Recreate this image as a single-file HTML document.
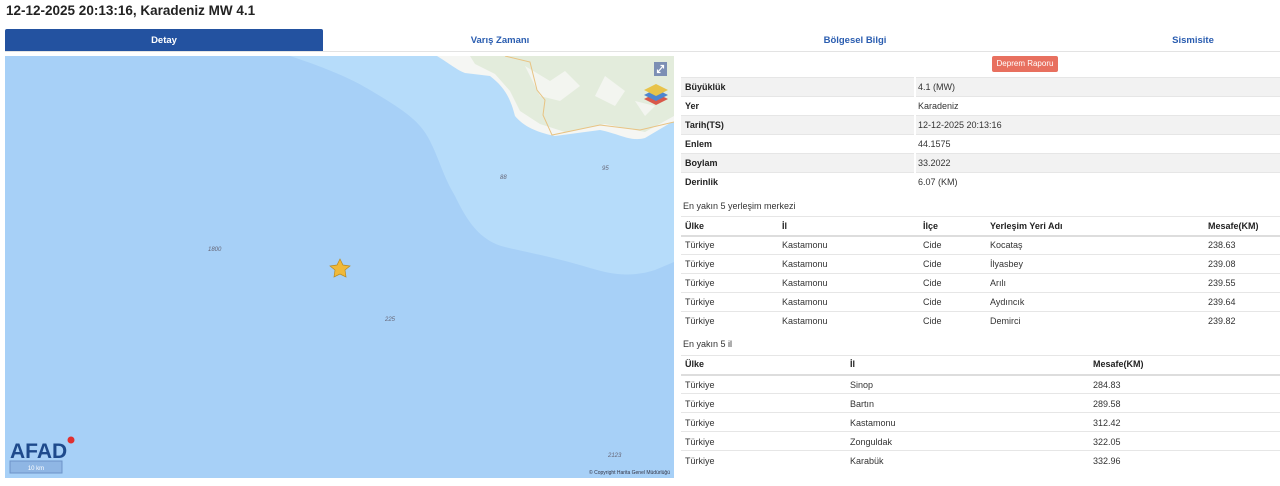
<!DOCTYPE html>
<html><head><meta charset="utf-8"><style>
*{margin:0;padding:0;box-sizing:border-box}
body{width:1280px;height:486px;background:#fff;font-family:"Liberation Sans",Arial,sans-serif;color:#222;position:relative;overflow:hidden}
.a{position:absolute;white-space:nowrap}
h1{position:absolute;left:6px;top:3px;font-size:13.5px;font-weight:bold;color:#222}
.tabs{position:absolute;left:5px;top:29px;width:1275px;height:23px;border-bottom:1px solid #e3e3e3}
.tab{position:absolute;top:0;height:22px;line-height:24px;font-size:9.5px;font-weight:bold;color:#2a5db0;text-align:center}
.t{font-size:9px;color:#333}
.b{font-weight:bold;color:#222}
.row{position:absolute;left:681px;width:599px;height:19px;border-top:1px solid #e6e6e6}
</style></head><body>
<h1>12-12-2025 20:13:16, Karadeniz MW 4.1</h1>
<div class="tabs">
<div class="tab" style="left:0;width:318px;background:#2352a0;color:#fff;border-radius:2px 2px 0 0">Detay</div>
<div class="tab" style="left:330px;width:330px">Varış Zamanı</div>
<div class="tab" style="left:680px;width:340px">Bölgesel Bilgi</div>
<div class="tab" style="left:1020px;width:336px">Sismisite</div>
</div>
<svg class="a" style="left:5px;top:56px" width="669" height="422" viewBox="0 0 669 422">
<rect width="669" height="422" fill="#a7d0f7"/>
<path d="M285 0 C330 15 350 25 365 34 C400 55 415 65 425 85 C435 105 438 120 450 140 C462 165 475 185 500 191 C520 196 545 200 585 212 C605 218 625 222 650 214 L669 206 L669 0Z" fill="#b6dcfa"/>
<path d="M432 0 C445 8 452 14 460 17 L485 20 C498 30 505 40 510 60 C520 72 535 77 550 80 L595 74 C615 78 625 86 640 82 L667 66 L669 66 L669 0Z" fill="#f5f6f3"/>
<path d="M465 0 L669 0 L669 60 L640 76 L600 68 L560 76 L535 68 L515 55 L505 35 L490 18 L470 8Z" fill="#e3ecdc"/>
<path d="M520 10 L545 25 L560 15 L575 30 L555 45 L535 40Z M600 20 L620 35 L610 50 L590 40Z M630 45 L650 50 L640 60Z" fill="#f3f5f0"/>
<path d="M500 0 L525 6 L532 34 L540 44 L538 59 L547 79 L595 69 L635 74 L669 66" fill="none" stroke="#e8c383" stroke-width="1"/>
<rect x="649" y="6" width="13" height="14" fill="#7c8fb4"/>
<path d="M652.5 16.5 L658.5 9.5 M655.5 9.5 L658.5 9.5 L658.5 12.5 M652.5 13.5 L652.5 16.5 L655.5 16.5" stroke="#fff" stroke-width="1.2" fill="none"/>
<path d="M651 49 L639 43 L651 37 L663 43Z" fill="#d9584a"/>
<path d="M651 45 L639 39 L651 33 L663 39Z" fill="#4f86cf"/>
<path d="M651 40 L639 34 L651 28 L663 34Z" fill="#e8c34a"/>
<polygon points="335,203 338,209 345,210 340,214 341,221 335,218 329,221 330,214 325,210 332,209" fill="#f0b93a" stroke="#b88a20" stroke-width=".7"/>
<g font-size="6" fill="#667" font-style="italic" font-family="Liberation Sans">
<text x="495" y="123">88</text><text x="597" y="114">95</text><text x="203" y="195">1800</text><text x="380" y="265">225</text><text x="603" y="401">2123</text></g>
<text x="5" y="402" font-size="21" font-weight="bold" fill="#1e4a8c" font-family="Liberation Sans">AFAD</text>
<circle cx="66" cy="384" r="3.5" fill="#e03030"/>
<rect x="5" y="405" width="52" height="12" fill="#8fb6e4" stroke="#6d93c8"/>
<text x="31" y="414" font-size="6" fill="#fff" text-anchor="middle">10 km</text>
<text x="665" y="418" font-size="5" fill="#334" text-anchor="end">© Copyright Harita Genel Müdürlüğü</text>
</svg>
<div class="a" style="left:992px;top:56px;width:66px;height:16px;background:#e8705f;border-radius:2px;color:#fff;font-size:8px;line-height:16px;text-align:center">Deprem Raporu</div>
<div class="row" style="top:77px;background:#f2f2f2"></div>
<div class="row" style="top:96px"></div>
<div class="row" style="top:115px;background:#f2f2f2"></div>
<div class="row" style="top:134px"></div>
<div class="row" style="top:153px;background:#f2f2f2"></div>
<div class="row" style="top:172px"></div>
<div class="a" style="left:914px;top:77px;width:2px;height:114px;background:#fff"></div>
<div class="a t b" style="left:685px;top:82px">Büyüklük</div><div class="a t" style="left:918px;top:82px">4.1 (MW)</div>
<div class="a t b" style="left:685px;top:101px">Yer</div><div class="a t" style="left:918px;top:101px">Karadeniz</div>
<div class="a t b" style="left:685px;top:120px">Tarih(TS)</div><div class="a t" style="left:918px;top:120px">12-12-2025 20:13:16</div>
<div class="a t b" style="left:685px;top:139px">Enlem</div><div class="a t" style="left:918px;top:139px">44.1575</div>
<div class="a t b" style="left:685px;top:158px">Boylam</div><div class="a t" style="left:918px;top:158px">33.2022</div>
<div class="a t b" style="left:685px;top:177px">Derinlik</div><div class="a t" style="left:918px;top:177px">6.07 (KM)</div>
<div class="a t" style="left:683px;top:201px">En yakın 5 yerleşim merkezi</div>
<div class="row" style="top:216px"></div>
<div class="row" style="top:235px;border-top:2px solid #ddd"></div>
<div class="row" style="top:254px"></div><div class="row" style="top:273px"></div><div class="row" style="top:292px"></div><div class="row" style="top:311px"></div>
<div class="a t b" style="left:685px;top:221px">Ülke</div><div class="a t b" style="left:782px;top:221px">İl</div><div class="a t b" style="left:923px;top:221px">İlçe</div><div class="a t b" style="left:990px;top:221px">Yerleşim Yeri Adı</div><div class="a t b" style="left:1208px;top:221px">Mesafe(KM)</div>
<div class="a t" style="left:685px;top:236px;line-height:19px">Türkiye<br>Türkiye<br>Türkiye<br>Türkiye<br>Türkiye</div>
<div class="a t" style="left:782px;top:236px;line-height:19px">Kastamonu<br>Kastamonu<br>Kastamonu<br>Kastamonu<br>Kastamonu</div>
<div class="a t" style="left:923px;top:236px;line-height:19px">Cide<br>Cide<br>Cide<br>Cide<br>Cide</div>
<div class="a t" style="left:990px;top:236px;line-height:19px">Kocataş<br>İlyasbey<br>Arılı<br>Aydıncık<br>Demirci</div>
<div class="a t" style="left:1208px;top:236px;line-height:19px">238.63<br>239.08<br>239.55<br>239.64<br>239.82</div>
<div class="a t" style="left:683px;top:339px">En yakın 5 il</div>
<div class="row" style="top:355px"></div>
<div class="row" style="top:374px;border-top:2px solid #ddd"></div>
<div class="row" style="top:393px"></div><div class="row" style="top:412px"></div><div class="row" style="top:431px"></div><div class="row" style="top:450px"></div>
<div class="a t b" style="left:685px;top:359px">Ülke</div><div class="a t b" style="left:850px;top:359px">İl</div><div class="a t b" style="left:1093px;top:359px">Mesafe(KM)</div>
<div class="a t" style="left:685px;top:376px;line-height:19px">Türkiye<br>Türkiye<br>Türkiye<br>Türkiye<br>Türkiye</div>
<div class="a t" style="left:850px;top:376px;line-height:19px">Sinop<br>Bartın<br>Kastamonu<br>Zonguldak<br>Karabük</div>
<div class="a t" style="left:1093px;top:376px;line-height:19px">284.83<br>289.58<br>312.42<br>322.05<br>332.96</div>
</body></html>
